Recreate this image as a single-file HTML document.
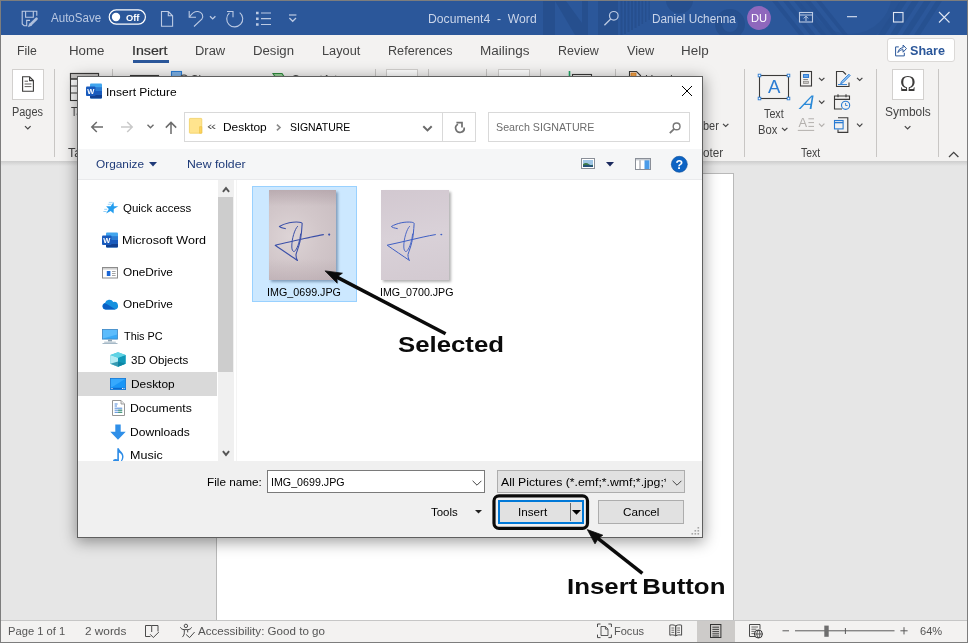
<!DOCTYPE html>
<html lang="en">
<head>
<meta charset="utf-8">
<title>Insert Picture - Word</title>
<style>
html,body{margin:0;padding:0;}
body{width:968px;height:643px;overflow:hidden;position:relative;background:#e6e6e6;font-family:"Liberation Sans",sans-serif;}
.a{position:absolute;}
.t{position:absolute;white-space:pre;line-height:1;transform-origin:0 0;font-family:"Liberation Sans",sans-serif;}
svg{position:absolute;overflow:visible;}
#frame{left:0;top:0;width:968px;height:643px;box-sizing:border-box;border:1px solid #7d7d7d;z-index:40;pointer-events:none;}
#titlebar{left:0;top:0;width:968px;height:35px;background:#2b579a;overflow:hidden;}
#tabs{left:0;top:35px;width:968px;height:31px;background:#f3f2f1;}
#ribbon{left:0;top:66px;width:968px;height:95px;background:#f3f2f1;}
#ribshadow{left:0;top:161px;width:968px;height:5px;background:linear-gradient(#cdcdcd,#e6e6e6);}
#page{left:216px;top:173px;width:518px;height:450px;background:#fff;border:1px solid #b9b9b9;box-sizing:border-box;}
#status{left:0;top:620px;width:968px;height:23px;background:#f3f2f1;border-top:1px solid #c6c6c6;box-sizing:border-box;}
.sep{position:absolute;width:1px;background:#c8c6c4;top:69px;height:88px;}
.bigbox{position:absolute;background:#fff;border:1px solid #d2d0ce;box-sizing:border-box;}
/* dialog */
#dlg{left:77px;top:76px;width:626px;height:462px;background:#fff;border:1px solid #5f5f5f;box-sizing:border-box;box-shadow:0 3px 14px 1px rgba(0,0,0,.38);z-index:10;}
.inbox{position:absolute;box-sizing:border-box;border:1px solid #d9d9d9;background:#fff;}
.btn{position:absolute;box-sizing:border-box;border:1px solid #adadad;background:#e1e1e1;}
</style>
</head>
<body>
<div id="root" class="a" style="left:0;top:0;width:968px;height:643px;will-change:transform;">
<!-- ======= Word window ======= -->
<div class="a" id="titlebar">
<svg style="left:0;top:0;" width="968" height="35" viewBox="0 0 968 35">
  <g fill="#264f8e">
    <rect x="543" y="1" width="12" height="34"/>
    <path d="M555 1l20 34h13V1h-6v22L566 1z"/>
    <rect x="598" y="1" width="20" height="34"/>
    <rect x="620.5" y="1" width="2" height="34"/><rect x="624" y="1" width="2" height="33"/><rect x="627.5" y="1" width="2" height="31"/>
    <rect x="631" y="1" width="2" height="29"/><rect x="634.5" y="1" width="2" height="27"/><rect x="638" y="1" width="1.8" height="25"/>
    <rect x="641.5" y="1" width="1.6" height="23"/><rect x="645" y="1" width="1.4" height="21"/><rect x="648.5" y="1" width="1.2" height="19"/>
    <circle cx="679.5" cy="0" r="13.5"/>
    <path d="M772 1h5.5l27 34h-5.5zM783 1h5.5l27 34h-5.5zM794 1h5.5l27 34h-5.5zM805 1h5.5l27 34h-5.5zM816 1h5l27 34h-5z" opacity=".8"/>
    <path d="M900 1h7l-22 34h-7zM912 1h7l-22 34h-7zM924 1h7l-22 34h-7zM936 1h6l-22 34h-6z" opacity=".75"/>
  </g>
  <circle cx="730" cy="24" r="11.5" fill="none" stroke="#264f8e" stroke-width="7"/>
  <circle cx="850" cy="-8" r="46" fill="none" stroke="#27518f" stroke-width="8" opacity=".55"/>
</svg>

<svg style="left:0;top:0;" width="968" height="35" viewBox="0 0 968 35" fill="none" stroke="#bccae3" stroke-width="1.1">
  <!-- save -->
  <path d="M36.8 15.7V11.3H22.2V23.9l1.9 1.8h2.6v-5.3h3.3"/>
  <path d="M25.6 11.3v5.9h7.7v-5.9"/>
  <path d="M36.5 18.7L30.6 24.5" stroke-width="2.6" stroke="#aebfdc" stroke-linecap="round"/>
  <path d="M31.5 25.4l-3.2 1.3 1.4-3.1z" fill="#aebfdc" stroke="#aebfdc" stroke-width=".6"/>
  <!-- toggle -->
  <rect x="109.2" y="9.9" width="36.2" height="14.2" rx="7.1" stroke="#fff" stroke-width="1.2"/>
  <circle cx="116" cy="17" r="4.2" fill="#fff" stroke="none"/>
  <!-- new doc -->
  <path d="M161.5 11.5h6.8l4.3 4.3v10.4h-11.1zM168.3 11.5v4.3h4.3"/>
  <!-- undo -->
  <path d="M189.2 11v6.2h6.8"/>
  <path d="M189.6 17c2-3.4 5-5.8 8.4-5.5 4 .4 6 4.4 3.8 7.6L194 26.5"/>
  <path d="M210 16.2l2.7 2.7 2.7-2.7" stroke-width="1.3"/>
  <!-- redo -->
  <path d="M239.7 12.6A8 8 0 1 1 229.4 12.9M227 11.5h6v5.8"/>
  <!-- bullets -->
  <path d="M256 13h2.6M256 18.7h2.6M256 24.5h2.6" stroke-width="2.6"/>
  <path d="M261 13h10M261 18.7h10M261 24.5h10" stroke-width="1.2"/>
  <!-- customize -->
  <path d="M289 15h7.4" stroke-width="1.2"/>
  <path d="M289.4 18l3.3 3.3 3.3-3.3" stroke-width="1.3"/>
  <!-- search -->
  <circle cx="613.8" cy="15.8" r="4.3" stroke-width="1.2"/>
  <path d="M610.7 19l-6.3 6.3" stroke-width="1.3"/>
  <!-- avatar -->
  <circle cx="759" cy="18" r="11.9" fill="#8f68bd" stroke="none"/>
  <!-- ribbon display -->
  <rect x="799.5" y="12.5" width="13" height="9.5" stroke-width="1.1"/>
  <path d="M799.5 15h13M806 21v-4.6M803.8 18.4l2.2-2.2 2.2 2.2" stroke-width="1"/>
  <!-- min / max / close -->
  <path d="M847 16.7h10" stroke="#dfe6f3" stroke-width="1.1"/>
  <rect x="893.5" y="12.5" width="9.5" height="9.5" stroke="#dfe6f3" stroke-width="1.1"/>
  <path d="M939 12l10.5 10.5M949.5 12L939 22.5" stroke="#dfe6f3" stroke-width="1.1"/>
</svg>

</div>
<div class="a" id="tabs">
  <div class="a" style="left:133px;top:25px;width:36px;height:3px;background:#2b579a;"></div>
  <div class="a" style="left:886.6px;top:3px;width:68px;height:23.5px;background:#fff;border:1px solid #dbd9d7;border-radius:3px;box-sizing:border-box;"></div>
<svg style="left:894.6px;top:9px;" width="12" height="12.5" viewBox="0 0 12 12.5" fill="none" stroke="#2b579a" stroke-width="1">
  <path d="M3.8 2.9H.6v9h8.7V8.8"/>
  <path d="M2.9 8.6c.4-2.8 2.2-4.7 5.2-4.9V1l3.3 3.6-3.3 3.6V5.7c-2.3 0-3.9.9-5.2 2.9z"/>
</svg>

</div>
<div class="a" id="ribbon"></div>
<!-- separators -->
<div class="sep" style="left:54px;"></div>
<div class="sep" style="left:112px;"></div>
<div class="sep" style="left:375px;"></div>
<div class="sep" style="left:428px;"></div>
<div class="sep" style="left:486px;"></div>
<div class="sep" style="left:540px;"></div>
<div class="sep" style="left:615px;"></div>
<div class="sep" style="left:744px;"></div>
<div class="sep" style="left:876px;"></div>
<div class="sep" style="left:938px;"></div>
<!-- big boxes -->
<div class="bigbox" style="left:12px;top:69px;width:32px;height:31px;"></div>
<div class="bigbox" style="left:386px;top:69px;width:32px;height:31px;"></div>
<div class="bigbox" style="left:498px;top:69px;width:32px;height:31px;"></div>
<div class="bigbox" style="left:892px;top:69px;width:32px;height:31px;"></div>
<svg style="left:0;top:66px;" width="968" height="95" viewBox="0 66 968 95" fill="none" stroke="#3b3a39" stroke-width="1.1">
  <!-- pages icon -->
  <path d="M22.6 76.8h7l3.8 3.8v10.6H22.6zM29.6 76.8v3.8h3.8"/>
  <path d="M24.6 81.2h3.4M24.6 84h6.8M24.6 86.6h6.8" stroke="#605e5c" stroke-width="1"/>
  <path d="M25 126.2l2.8 2.8 2.8-2.8" stroke-width="1.2" stroke="#444"/>
  <!-- table icon (mostly hidden) -->
  <rect x="70.5" y="73.5" width="28" height="27" fill="#fff"/>
  <rect x="70.5" y="73.5" width="28" height="5.5" fill="#c8c6c4"/>
  <path d="M70.5 79h28M70.5 86h28M70.5 93h28M80 79v21.5M89.5 79v21.5" stroke-width="1"/>
  <!-- picture icon top (hidden mostly) -->
  <rect x="130.5" y="75.5" width="28" height="22" />
  <!-- shapes icon -->
  <rect x="171.5" y="71.5" width="10" height="10" fill="#7fb2e5" stroke="#2b7cd3"/>
  <circle cx="184" cy="79" r="4" fill="#f3f2f1" stroke="#3b3a39"/>
  <!-- smartart icon -->
  <path d="M273 73.5h9l4 6h-9z" fill="#9ad29a" stroke="#2e8b3d"/>
  <!-- chart-ish -->
  <path d="M569.5 71v8" stroke="#21a366" stroke-width="1.6"/>
  <rect x="572.5" y="74.5" width="19" height="12"/>
  <!-- header icon -->
  <path d="M629.5 71.5h7l4 4v10h-11z" fill="#fff"/>
  <rect x="631" y="73" width="5" height="4" fill="#f7a64a" stroke="#d87b1c" stroke-width=".8"/>
  <!-- 'ber' caret -->
  <path d="M723 123.8l2.7 2.7 2.7-2.7" stroke-width="1.2" stroke="#444"/>
  <!-- text box icon -->
  <rect x="759.5" y="75.5" width="29" height="23" stroke="#3b3a39" stroke-width="1.1"/>
  <g fill="#fff" stroke="#2b7cd3" stroke-width=".9">
    <rect x="758.2" y="74.2" width="2.6" height="2.6"/><rect x="787.2" y="74.2" width="2.6" height="2.6"/>
    <rect x="758.2" y="97.2" width="2.6" height="2.6"/><rect x="787.2" y="97.2" width="2.6" height="2.6"/>
  </g>
  <text x="774.1" y="93.3" font-family="Liberation Sans, sans-serif" font-size="18.6" fill="#2b7cd3" stroke="none" text-anchor="middle">A</text>
  <path d="M782 127.8l2.7 2.7 2.7-2.7" stroke-width="1.2" stroke="#444"/>
  <!-- quick parts -->
  <rect x="800.5" y="71.5" width="11" height="14.5"/>
  <rect x="803.4" y="74.6" width="5.2" height="2.8" fill="#6aa9ea" stroke="#1a6ed0" stroke-width=".9"/>
  <path d="M803.3 79.6h4.6" stroke="#605e5c" stroke-width=".8"/>
  <rect x="803.4" y="81.3" width="5.2" height="2.2" fill="#c8c6c4" stroke="#8a8886" stroke-width=".7"/>
  <path d="M819 77.8l2.7 2.7 2.7-2.7" stroke-width="1.2" stroke="#444"/>
  <!-- wordart -->
  <text transform="translate(799.4 109.4) skewX(-20)" font-family="Liberation Sans, sans-serif" font-style="italic" font-size="19.5" fill="#2b8ad8" stroke="none">A</text>
  <path d="M819 100.6l2.7 2.7 2.7-2.7" stroke-width="1.2" stroke="#444"/>
  <!-- drop cap (disabled) -->
  <g stroke="#b3b0ad">
    <text x="802.9" y="126.5" font-family="Liberation Sans, sans-serif" font-size="12.9" fill="#b3b0ad" stroke="none" text-anchor="middle">A</text>
    <path d="M808.4 118.8h5.6M808.4 122.6h5.6M808.4 126.4h5.6M797.8 130.4h16.4" stroke-width="1"/>
    <path d="M819 123.6l2.7 2.7 2.7-2.7" stroke-width="1.2"/>
  </g>
  <!-- signature line -->
  <path d="M843 71.5h-6.5v15h12.5v-4"/>
  <path d="M843 71.5l3 3" />
  <path d="M848.9 74.2l1.3 1.3-7.3 7.3-2.3.9.9-2.3z" fill="#8ec1f2" stroke="#2b7cd3" stroke-width=".9"/>
  <path d="M838 84.6h9" stroke="#2b7cd3" stroke-width="1"/>
  <path d="M857 77.8l2.7 2.7 2.7-2.7" stroke-width="1.2" stroke="#444"/>
  <!-- date & time -->
  <path d="M842 109h-7.5v-13h15v4"/>
  <path d="M834.5 99.4h15M838 94.2v3M846 94.2v3"/>
  <circle cx="845.6" cy="105.3" r="4.1" fill="#f3f2f1" stroke="#2b7cd3" stroke-width="1.1"/>
  <path d="M845.6 103v2.5h2" stroke="#2b7cd3" stroke-width=".9"/>
  <!-- object -->
  <path d="M838 117.8h9.8v14.6h-9.8v-3"/>
  <rect x="834.5" y="120.5" width="8.6" height="8.4" fill="#f3f2f1" stroke="#2b7cd3" stroke-width="1.1"/>
  <path d="M834.5 122.6h8.6" stroke="#2b7cd3" stroke-width="1.4"/>
  <path d="M857 123.6l2.7 2.7 2.7-2.7" stroke-width="1.2" stroke="#444"/>
  <!-- symbols caret and collapse -->
  <path d="M904.8 126.2l2.8 2.8 2.8-2.8" stroke-width="1.2" stroke="#444"/>
  <path d="M949 157l4.7-4.7 4.7 4.7" stroke-width="1.3" stroke="#444"/>
</svg>
<span class="t" style="left:899.8px;top:71.6px;font-size:23px;color:#3b3a39;font-family:'Liberation Serif',serif;transform:scaleX(.92);">&#937;</span>

<div class="a" id="ribshadow"></div>
<div class="a" id="page"></div>
<div class="a" id="status">
<div class="a" style="left:697px;top:0;width:38px;height:21px;background:#cdcbc9;"></div>
<svg style="left:0;top:-1px;" width="968" height="23" viewBox="0 620 968 23" fill="none" stroke="#4a4a4a" stroke-width="1">
  <!-- book/proofing -->
  <path d="M151.7 632V625.5H145.5V636.5H150.4M151.7 625.5H158V631.4"/>
  <path d="M150.2 634.3L153.3 637.5 158.9 632"/>
  <!-- accessibility -->
  <circle cx="185.9" cy="625.9" r="1.7"/>
  <path d="M180.4 627.3c.6 1.5 2 2.3 3.9 2.3h3.4c1.9 0 3.3-.8 3.9-2.3M184.3 629.6v3.2c0 1.7-.6 2.9-2 4.3M187.7 629.6v2.8"/>
  <path d="M186.1 634.5l3.5 3.1 5-5.6"/>
  <!-- focus -->
  <path d="M597.5 627v-3h3M608.4 624h3v3M611.4 634.6v3h-3M600.5 637.6h-3v-3"/>
  <path d="M601 626.5h4.4l2.6 2.6v6.4h-7zM605.4 626.5v2.6h2.6" stroke-width=".9"/>
  <!-- read mode -->
  <path d="M669.8 625.2c2-.6 4-.4 5.9.6v10c-1.9-1-3.9-1.2-5.9-.6zM681.6 625.2c-2-.6-4-.4-5.9.6v10c1.9-1 3.9-1.2 5.9-.6z"/>
  <path d="M671.4 628h2.8M671.4 630.2h2.8M671.4 632.4h2.8M677.2 628h2.8M677.2 630.2h2.8M677.2 632.4h2.8" stroke-width=".8"/>
  <!-- print layout -->
  <rect x="710.5" y="624.5" width="10.4" height="13" stroke="#333"/>
  <path d="M712.4 627.2h6.6M712.4 629.4h6.6M712.4 631.6h6.6M712.4 633.8h6.6M712.4 636h6.6" stroke="#333" stroke-width=".9"/>
  <!-- web layout -->
  <path d="M755 636.5h-5.5v-12h10.5v5"/>
  <path d="M751.4 627h6.6M751.4 629.2h5M751.4 631.4h3.4M751.4 633.6h2.6" stroke-width=".8"/>
  <circle cx="758.4" cy="634" r="4" stroke="#333"/>
  <path d="M754.4 634h8M758.4 630c-2 2.4-2 5.6 0 8M758.4 630c2 2.4 2 5.6 0 8" stroke-width=".8" stroke="#333"/>
  <!-- zoom slider -->
  <path d="M782.5 630.8h6.5M795 630.8h99.5M900.4 630.8h7.2M904 627.2v7.2M845.4 628v6" stroke="#5a5a5a"/>
  <rect x="824.3" y="625.6" width="4.4" height="11.2" fill="#6e6e6e" stroke="none"/>
</svg>

</div>

<!-- ======= dialog ======= -->
<div class="a" id="dlg">
<div class="a" style="left:-78px;top:-77px;width:0;height:0;">
  <!-- title bar -->
  <svg style="left:86px;top:83px;" width="16" height="16" viewBox="0 0 16 16">
    <rect x="4" y="0.5" width="12" height="15" rx="1" fill="#41a5ee"/>
    <rect x="4" y="4.2" width="12" height="3.8" fill="#2b7cd3"/>
    <rect x="4" y="8" width="12" height="3.8" fill="#185abd"/>
    <path d="M4 11.8h12v2.7a1 1 0 0 1-1 1H5a1 1 0 0 1-1-1z" fill="#103f91"/>
    <rect x="0" y="3.5" width="9.5" height="9.5" rx="1" fill="#185abd"/>
    <text x="4.75" y="11" font-family="Liberation Sans, sans-serif" font-size="7.5" font-weight="700" fill="#fff" text-anchor="middle">W</text>
  </svg>
  <svg style="left:682px;top:86px;" width="10" height="10" viewBox="0 0 10 10"><path d="M0 0L10 10M10 0L0 10" stroke="#000" stroke-width="1" fill="none"/></svg>

  <!-- nav arrows -->
  <svg style="left:90px;top:120px;" width="90" height="15" viewBox="0 0 90 15">
    <path d="M13 7H1.8M6.8 2L1.8 7l5 5" stroke="#6b6b6b" stroke-width="1.5" fill="none"/>
    <path d="M31 7H42.2M37.2 2l5 5-5 5" stroke="#c9c9c9" stroke-width="1.5" fill="none"/>
    <path d="M57.5 4.8l3 3 3-3" stroke="#6b6b6b" stroke-width="1.4" fill="none"/>
    <path d="M81 14V2.5M75.8 7.6L81 2.4l5.2 5.2" stroke="#6b6b6b" stroke-width="1.5" fill="none"/>
  </svg>
  <!-- address box -->
  <div class="inbox" style="left:184px;top:112px;width:292px;height:30px;"></div>
  <div class="a" style="left:442px;top:113px;width:1px;height:28px;background:#d9d9d9;"></div>
  <svg style="left:188.8px;top:118.3px;" width="13.2" height="15.6" viewBox="0 0 13.2 15.6">
    <rect x=".4" y=".4" width="12.4" height="14.8" rx=".6" fill="#ffe48e" stroke="#f1cf62" stroke-width=".8"/>
    <path d="M10.6 8.7h2.2v6.5h-2.2z" fill="#ffd55c" stroke="#eabf45" stroke-width=".6"/>
  </svg>
  <svg style="left:276px;top:123.6px;" width="5" height="7" viewBox="0 0 5 7"><path d="M.9.7l3.1 2.8L.9 6.3" stroke="#8a8a8a" stroke-width="1.6" fill="none"/></svg>
  <svg style="left:421.5px;top:124.5px;" width="11" height="8" viewBox="0 0 11 8"><path d="M1.3 1.3l4.2 4.1 4.2-4.1" stroke="#6a6a6a" stroke-width="2" fill="none"/></svg>
  <svg style="left:450px;top:118px;" width="20" height="18" viewBox="450 118 20 18" fill="none" stroke="#707070" stroke-width="1.7">
    <path d="M464.2 127.5A4.3 4.3 0 1 1 458 124.2"/>
    <path d="M456.4 122.7H462V127.4"/>
  </svg>
  <!-- search box -->
  <div class="inbox" style="left:488px;top:112px;width:202px;height:30px;"></div>
  <svg style="left:669px;top:122px;" width="12" height="12" viewBox="0 0 12 12"><circle cx="7.6" cy="4.4" r="3.4" stroke="#777" stroke-width="1.4" fill="none"/><path d="M5.2 6.8L.8 11.2" stroke="#777" stroke-width="1.8"/></svg>

  <!-- toolbar row -->
  <div class="a" style="left:78px;top:149px;width:624px;height:31px;background:#f5f6f7;border-bottom:1px solid #e9eaec;box-sizing:border-box;"></div>
  <svg style="left:148.6px;top:162px;" width="8" height="5" viewBox="0 0 8 5"><path d="M0 0h8L4 4.4z" fill="#1e3a78"/></svg>
  <svg style="left:581px;top:158px;" width="14" height="11" viewBox="0 0 14 11">
    <rect x=".5" y=".5" width="13" height="10" fill="#fff" stroke="#8a8f98"/>
    <rect x="2" y="2" width="10" height="7" fill="#9fc6e6"/>
    <path d="M2 6.2c2-1.6 4-1.4 6 0s3 .8 4 .2V9H2z" fill="#3d7a4a"/>
    <path d="M2 7.6c3-.8 6-.6 10 0V9H2z" fill="#24507a"/>
  </svg>
  <svg style="left:605.5px;top:162px;" width="8" height="5" viewBox="0 0 8 5"><path d="M0 0h8L4 4.4z" fill="#1b2a5e"/></svg>
  <svg style="left:635px;top:158px;" width="16" height="12" viewBox="0 0 16 12">
    <rect x=".5" y=".5" width="15" height="11" fill="#fff" stroke="#8a8f98"/>
    <rect x="9.5" y="2" width="5" height="9" fill="#4a9be8"/>
    <path d="M5 1v10" stroke="#8a8f98"/>
    <rect x="1" y="1" width="14" height="1.4" fill="#c8ccd2"/>
  </svg>
  <svg style="left:671px;top:155.5px;" width="17" height="17" viewBox="0 0 17 17">
    <circle cx="8.3" cy="8.3" r="8" fill="#0c63c4" stroke="#084a96" stroke-width=".6"/>
    <text x="8.3" y="12.6" font-family="Liberation Sans, sans-serif" font-size="12.5" font-weight="700" fill="#fff" text-anchor="middle">?</text>
  </svg>

  <!-- nav pane scrollbar -->
  <div class="a" style="left:218px;top:180px;width:16px;height:281px;background:#f0f0f0;"></div>
  <div class="a" style="left:218px;top:197px;width:15px;height:175px;background:#cdcdcd;"></div>
  <svg style="left:221.5px;top:185.6px;" width="8" height="7" viewBox="0 0 8 7"><path d="M.9 5.9L4 2.1 7.1 5.9" stroke="#555" stroke-width="1.9" fill="none"/></svg>
  <svg style="left:221.5px;top:449.6px;" width="8" height="7" viewBox="0 0 8 7"><path d="M.9 1.1L4 4.9 7.1 1.1" stroke="#555" stroke-width="1.9" fill="none"/></svg>
  <div class="a" style="left:236px;top:180px;width:1px;height:281px;background:#f4f4f4;"></div>
  <!-- selected row -->
  <div class="a" style="left:78px;top:372px;width:139px;height:24px;background:#d9d9d9;"></div>
  <!-- quick access star -->
  <svg style="left:104px;top:201px;" width="15" height="14" viewBox="0 0 15 14">
    <polygon points="9.6,0.9 9.8,5.2 14.3,5.3 9.8,8.1 9.6,12.5 6.7,9.9 2.1,12.5 4.8,8.1 2.1,5.3 6.7,5.2" fill="#249dee"/>
    <path d="M4.8 1.4h4M3.8 3.3h3.6" stroke="#6fc0f5" stroke-width=".8" opacity=".8"/>
    <path d="M.2 8.3h3M-.6 10.5h3.2" stroke="#6fc0f5" stroke-width=".9" opacity=".8"/>
  </svg>
  <!-- word -->
  <svg style="left:102px;top:231.5px;" width="16" height="16" viewBox="0 0 16 16">
    <rect x="4" y="0.5" width="12" height="15" rx="1" fill="#41a5ee"/>
    <rect x="4" y="4.2" width="12" height="3.8" fill="#2b7cd3"/>
    <rect x="4" y="8" width="12" height="3.8" fill="#185abd"/>
    <path d="M4 11.8h12v2.7a1 1 0 0 1-1 1H5a1 1 0 0 1-1-1z" fill="#103f91"/>
    <rect x="0" y="3.5" width="9.5" height="9.5" rx="1" fill="#185abd"/>
    <text x="4.75" y="11" font-family="Liberation Sans, sans-serif" font-size="7.5" font-weight="700" fill="#fff" text-anchor="middle">W</text>
  </svg>
  <!-- onedrive window -->
  <svg style="left:102px;top:266.5px;" width="16" height="12" viewBox="0 0 16 12">
    <rect x=".5" y=".5" width="15" height="10.5" fill="#fff" stroke="#8c8c8c"/>
    <rect x="1" y="1" width="14" height="1.6" fill="#d0d0d0"/>
    <rect x="4.8" y="4" width="3.6" height="5" fill="#1a66d6"/>
    <path d="M10 4.5h3.6M10 6.5h3.6M10 8.5h3.6" stroke="#9a9a9a" stroke-width=".9"/>
  </svg>
  <!-- onedrive cloud -->
  <svg style="left:102px;top:298.5px;" width="16" height="11" viewBox="0 0 16 11">
    <path d="M3.6 10.6A3.3 3.3 0 0 1 3 4.1 4.5 4.5 0 0 1 11.3 3 3.8 3.8 0 0 1 13 10.6z" fill="#1490df"/>
    <path d="M3.6 10.6A3.3 3.3 0 0 1 2.6 4.3C6 5.5 9 8 13.6 10.4L13 10.6z" fill="#0a5fc4"/>
  </svg>
  <!-- this pc -->
  <svg style="left:102px;top:328.7px;" width="16" height="15" viewBox="0 0 16 15">
    <rect x=".5" y=".5" width="15" height="9.6" fill="#3aa9f6" stroke="#3b86c4" stroke-width=".8"/>
    <path d="M1 1h14v4.5L1 9.6z" fill="#5cbcfc"/>
    <rect x="6" y="10.4" width="4" height="2" fill="#8da2b2"/>
    <path d="M2.2 13.2h11.6M.5 14.5h15" stroke="#9bb0c0" stroke-width=".9"/>
  </svg>
  <!-- 3d objects -->
  <svg style="left:110px;top:352px;" width="16" height="15" viewBox="0 0 16 15">
    <path d="M8 .3L15.6 3v8.8L8 14.7.4 11.8V3z" fill="#37c2d8"/>
    <path d="M.4 3L8 5.7V14.7L.4 11.8z" fill="#b5ecf4"/>
    <path d="M8 5.7L15.6 3v8.8L8 14.7z" fill="#1298b8"/>
    <path d="M.4 11.8L8 9.6l7.6 2.2L8 14.7z" fill="#0e7f9c" opacity=".75"/>
    <path d="M.4 3L8 .3 15.6 3 8 5.7z" fill="#5fd3e4"/>
  </svg>
  <!-- desktop -->
  <svg style="left:110px;top:377.5px;" width="16" height="12" viewBox="0 0 16 12">
    <rect x=".4" y=".4" width="15.2" height="11.2" fill="#1a96f6" stroke="#1279d6" stroke-width=".8"/>
    <path d="M1 1h14L1 9.8z" fill="#36a9fd"/>
    <rect x=".8" y="9.8" width="14.4" height="1.4" fill="#0c6bd0"/>
    <path d="M1.4 10.5h1.2M12 10.5h1M13.6 10.5h1" stroke="#fff" stroke-width=".9"/>
  </svg>
  <!-- documents -->
  <svg style="left:111.5px;top:400px;" width="13" height="16" viewBox="0 0 13 16">
    <path d="M.5.5h8.5l3.5 3.5v11.5H.5z" fill="#fff" stroke="#8a8a8a" stroke-width=".9"/>
    <path d="M9 .5v3.5h3.5" fill="#e8e8e8" stroke="#8a8a8a" stroke-width=".8"/>
    <path d="M2.6 4h3M2.6 6h2.4M2.6 8.2h7.6M2.6 10.2h7.6M2.6 12.3h7.6" stroke="#3a7bd5" stroke-width=".9"/>
    <path d="M6.2 12.3h4M6.2 10.2h4" stroke="#3f9c55" stroke-width=".9"/>
  </svg>
  <!-- downloads -->
  <svg style="left:110px;top:424px;" width="16" height="16" viewBox="0 0 16 16">
    <path d="M5.3.4h5.4v7.3h5L8 15.7.3 7.7h5z" fill="#2f8fe8"/>
  </svg>
  <!-- music -->
  <svg style="left:113px;top:447.5px;" width="11" height="13.5" viewBox="0 0 11 13.5">
    <path d="M4.3.2h1.6c.6 2.6 4.6 4.2 4.6 8.2 0 2.2-1 3.8-1.8 5.1H7.5c.9-1.4 1.6-3 1.6-4.8 0-2-1.6-3.4-3.2-4.1v8.9H4.3z" fill="#2c8be6"/>
    <ellipse cx="2.8" cy="13" rx="2.8" ry="2" fill="#2c8be6"/>
  </svg>


  <!-- thumbnails -->
  <div class="a" style="left:252px;top:186px;width:105px;height:116px;background:#cce8ff;border:1px solid #99d1ff;box-sizing:border-box;"></div>
  <div class="a" style="left:269px;top:190px;width:67px;height:90px;background:linear-gradient(180deg,rgba(150,130,138,.34) 0%,rgba(150,130,138,0) 18%,rgba(150,130,138,0) 76%,rgba(150,130,138,.22) 100%),radial-gradient(ellipse at 32% 52%,#ddd4d6 0%,#d2c7ca 45%,#c8bcc0 100%);box-shadow:1.5px 1.5px 2.5px rgba(20,50,90,.4);"></div>
  <div class="a" style="left:381px;top:190px;width:68px;height:90px;background:linear-gradient(170deg,#d2c8d0 0%,#d9d1d8 50%,#d3cad1 100%);box-shadow:1.5px 1.5px 2.5px rgba(0,0,0,.3);"></div>
  <svg style="left:269px;top:190px;" width="68" height="90" viewBox="0 0 68 90">
    <g fill="none" stroke="#3a4fa8" stroke-width="1.1" stroke-linecap="round" stroke-linejoin="round">
      <path d="M16.3 38.6C13.5 38 11 37.5 10.4 36.5C13 34.8 17 33.5 20.2 32.8C24 32 28 31.9 30.3 32.2C32.5 32.5 33.5 33 33.1 34.2C32.9 37 32.7 40 32.4 43C32 47 31.4 50 30.7 52.5C29.8 57 28 61 27 64.5C26.9 67 27.6 69 28.5 70.5C22 66 13 60 6.2 55.2C14 53.6 22 51.6 30 49.8C38 48 46 46 54.4 44.6"/>
      <path d="M28.5 36.4C25.8 39 22.6 49 22.8 57C23 61.5 24.8 62.5 26.4 60.5C29 57 31 50 31.6 44" stroke-width="1"/>
      <circle cx="60.2" cy="44.6" r=".5" fill="#3a4fa8"/>
    </g>
  </svg>
  <svg style="left:381px;top:190px;" width="68" height="90" viewBox="0 0 68 90">
    <g fill="none" stroke="#3f5fc4" stroke-width="1" stroke-linecap="round" stroke-linejoin="round">
      <path d="M16.3 38.6C13.5 38 11 37.5 10.4 36.5C13 34.8 17 33.5 20.2 32.8C24 32 28 31.9 30.3 32.2C32.5 32.5 33.5 33 33.1 34.2C32.9 37 32.7 40 32.4 43C32 47 31.4 50 30.7 52.5C29.8 57 28 61 27 64.5C26.9 67 27.6 69 28.5 70.5C22 66 13 60 6.2 55.2C14 53.6 22 51.6 30 49.8C38 48 46 46 54.4 44.6"/>
      <path d="M28.5 36.4C25.8 39 22.6 49 22.8 57C23 61.5 24.8 62.5 26.4 60.5C29 57 31 50 31.6 44" stroke-width=".9"/>
      <circle cx="60.2" cy="44.6" r=".45" fill="#3f5fc4"/>
    </g>
  </svg>

  <!-- bottom panel -->
  <div class="a" style="left:78px;top:461px;width:624px;height:76px;background:#f0f0f0;"></div>
  <div class="a" style="left:267px;top:470px;width:218px;height:23px;background:#fff;border:1px solid #7a7a7a;box-sizing:border-box;"></div>
  <svg style="left:471.5px;top:479.5px;" width="10" height="6" viewBox="0 0 10 6"><path d="M.6.8L5 5.2 9.4.8" stroke="#444" stroke-width="1" fill="none"/></svg>
  <div class="btn" style="left:497px;top:470px;width:188px;height:23px;"></div>
  <svg style="left:671.5px;top:479.5px;" width="10" height="6" viewBox="0 0 10 6"><path d="M.6.8L5 5.2 9.4.8" stroke="#444" stroke-width="1" fill="none"/></svg>
  <svg style="left:474.5px;top:510.3px;" width="7" height="4" viewBox="0 0 7 4"><path d="M0 0h7L3.5 3.6z" fill="#222"/></svg>
  <div class="btn" style="left:498px;top:500px;width:86px;height:23.5px;border:2px solid #0078d7;"></div>
  <div class="a" style="left:569.5px;top:502.5px;width:1px;height:18.5px;background:#6a6a6a;"></div>
  <svg style="left:572.2px;top:509.5px;" width="9" height="5" viewBox="0 0 9 5"><path d="M0 0h9L4.5 4.8z" fill="#000"/></svg>
  <div class="btn" style="left:598px;top:500px;width:86px;height:23.5px;"></div>
  <svg style="left:690px;top:526.4px;" width="10" height="10" viewBox="0 0 10 10" fill="#a6a6a6">
    <rect x="7.5" y="1" width="1.6" height="1.6"/><rect x="4.5" y="4" width="1.6" height="1.6"/><rect x="7.5" y="4" width="1.6" height="1.6"/>
    <rect x="1.5" y="7" width="1.6" height="1.6"/><rect x="4.5" y="7" width="1.6" height="1.6"/><rect x="7.5" y="7" width="1.6" height="1.6"/>
  </svg>
</div>

</div>

<!-- ======= annotations ======= -->
<svg style="left:0;top:0;z-index:25;" width="968" height="643" viewBox="0 0 968 643">
  <rect x="494" y="495.8" width="93.5" height="32.5" rx="5" ry="5" fill="none" stroke="#0b0b0b" stroke-width="3.2"/>
  <!-- arrow 1 -->
  <path d="M445.6 333.8L335 276.1" stroke="#0b0b0b" stroke-width="3.5" fill="none"/>
  <path d="M325.1 270.9L342.4 273.2 336.8 277 337.2 283.2z" fill="#0b0b0b" stroke="#0b0b0b" stroke-width=".8" stroke-linejoin="round"/>
  <!-- arrow 2 -->
  <path d="M642.4 573.3L597 537.6" stroke="#0b0b0b" stroke-width="3.5" fill="none"/>
  <path d="M587.3 529.6L602.8 535.2 598.2 538.4 595 543.8z" fill="#0b0b0b" stroke="#0b0b0b" stroke-width=".8" stroke-linejoin="round"/>
</svg>


<!-- ======= text ======= -->
<span class="t" id="t0" style="left:51.20px;top:12.00px;font-size:12px;color:#b9c8e2;font-weight:400;transform:scaleX(0.9631);">AutoSave</span>
<span class="t" id="t1" style="left:126.31px;top:13.00px;font-size:9.6px;color:#ffffff;font-weight:700;transform:scaleX(0.9704);">Off</span>
<span class="t" id="t2" style="left:428.39px;top:13.00px;font-size:12px;color:#c9d4e9;font-weight:400;transform:scaleX(1.0142);">Document4  -  Word</span>
<span class="t" id="t3" style="left:652.02px;top:13.00px;font-size:12px;color:#c9d4e9;font-weight:400;transform:scaleX(0.9822);">Daniel Uchenna</span>
<span class="t" id="t4" style="left:750.53px;top:13.00px;font-size:11.5px;color:#ffffff;font-weight:400;transform:scaleX(0.9695);">DU</span>
<span class="t" id="t5" style="left:17.48px;top:45.00px;font-size:12px;color:#444;font-weight:400;transform:scaleX(1.0197);">File</span>
<span class="t" id="t6" style="left:69.29px;top:45.00px;font-size:12px;color:#444;font-weight:400;transform:scaleX(1.1082);">Home</span>
<span class="t" id="t7" style="left:132.22px;top:45.00px;font-size:12px;color:#333;font-weight:400;transform:scaleX(1.1828);-webkit-text-stroke:.22px #3a3a3a;">Insert</span>
<span class="t" id="t8" style="left:194.52px;top:45.00px;font-size:12px;color:#444;font-weight:400;transform:scaleX(1.0778);">Draw</span>
<span class="t" id="t9" style="left:252.50px;top:45.00px;font-size:12px;color:#444;font-weight:400;transform:scaleX(1.0986);">Design</span>
<span class="t" id="t10" style="left:321.54px;top:45.00px;font-size:12px;color:#444;font-weight:400;transform:scaleX(1.0629);">Layout</span>
<span class="t" id="t11" style="left:388.45px;top:45.00px;font-size:12px;color:#444;font-weight:400;transform:scaleX(1.0517);">References</span>
<span class="t" id="t12" style="left:480.47px;top:45.00px;font-size:12px;color:#444;font-weight:400;transform:scaleX(1.1271);">Mailings</span>
<span class="t" id="t13" style="left:558.26px;top:45.00px;font-size:12px;color:#444;font-weight:400;transform:scaleX(1.0379);">Review</span>
<span class="t" id="t14" style="left:626.80px;top:45.00px;font-size:12px;color:#444;font-weight:400;transform:scaleX(1.0563);">View</span>
<span class="t" id="t15" style="left:681.48px;top:45.00px;font-size:12px;color:#444;font-weight:400;transform:scaleX(1.1183);">Help</span>
<span class="t" id="t16" style="left:910.38px;top:45.00px;font-size:12px;color:#2b579a;font-weight:700;transform:scaleX(1.0492);">Share</span>
<span class="t" id="t17" style="left:11.89px;top:106.00px;font-size:12px;color:#444;font-weight:400;transform:scaleX(0.9108);">Pages</span>
<span class="t" id="t18" style="left:70.79px;top:106.00px;font-size:12px;color:#444;font-weight:400;transform:scaleX(0.8571);">Table</span>
<span class="t" id="t19" style="left:67.84px;top:147.00px;font-size:12px;color:#444;font-weight:400;transform:scaleX(1.0265);">Tables</span>
<span class="t" id="t20" style="left:702.52px;top:120.00px;font-size:12px;color:#444;font-weight:400;transform:scaleX(0.9091);">ber</span>
<span class="t" id="t21" style="left:702.51px;top:147.00px;font-size:12px;color:#444;font-weight:400;transform:scaleX(0.9750);">oter</span>
<span class="t" id="t22" style="left:763.88px;top:108.00px;font-size:12px;color:#444;font-weight:400;transform:scaleX(0.8966);">Text</span>
<span class="t" id="t23" style="left:757.67px;top:124.00px;font-size:12px;color:#444;font-weight:400;transform:scaleX(0.9333);">Box</span>
<span class="t" id="t24" style="left:801.38px;top:147.00px;font-size:12px;color:#444;font-weight:400;transform:scaleX(0.8690);">Text</span>
<span class="t" id="t25" style="left:884.50px;top:106.00px;font-size:12px;color:#444;font-weight:400;transform:scaleX(0.9956);">Symbols</span>
<span class="t" id="t26" style="left:190.53px;top:74.00px;font-size:12px;color:#444;font-weight:400;transform:scaleX(0.9308);">Shapes</span>
<span class="t" id="t27" style="left:291.52px;top:74.00px;font-size:12px;color:#444;font-weight:400;transform:scaleX(0.9626);">SmartArt</span>
<span class="t" id="t28" style="left:645.03px;top:74.00px;font-size:12px;color:#444;font-weight:400;transform:scaleX(0.9673);">Header</span>
<span class="t" id="t29" style="left:8.31px;top:626.00px;font-size:10.6px;color:#555;font-weight:400;transform:scaleX(1.0547);">Page 1 of 1</span>
<span class="t" id="t30" style="left:84.64px;top:626.00px;font-size:10.6px;color:#555;font-weight:400;transform:scaleX(1.1145);">2 words</span>
<span class="t" id="t31" style="left:198.10px;top:626.00px;font-size:10.6px;color:#555;font-weight:400;transform:scaleX(1.0944);">Accessibility: Good to go</span>
<span class="t" id="t32" style="left:613.92px;top:626.00px;font-size:10.6px;color:#555;font-weight:400;transform:scaleX(1.0414);">Focus</span>
<span class="t" id="t33" style="left:920.48px;top:626.00px;font-size:10.6px;color:#555;font-weight:400;transform:scaleX(1.0469);">64%</span>
<span class="t" id="t34" style="left:398.15px;top:333.00px;font-size:22.8px;color:#0b0b0b;font-weight:700;transform:scaleX(1.1301);z-index:30;">Selected</span>
<span class="t" id="t35" style="left:566.60px;top:575.00px;font-size:22.8px;color:#0b0b0b;font-weight:700;transform:scaleX(1.1328);z-index:30;word-spacing:-2px;">Insert Button</span>
<span class="t" id="t36" style="left:105.98px;top:87.00px;font-size:11.8px;color:#000;font-weight:400;transform:scaleX(1.0176);z-index:20;">Insert Picture</span>
<span class="t" id="t37" style="left:206.69px;top:121.00px;font-size:11.8px;color:#555;font-weight:400;transform:scaleX(1.4182);z-index:20;">«</span>
<span class="t" id="t38" style="left:223.29px;top:122.00px;font-size:11.8px;color:#000;font-weight:400;transform:scaleX(1.0108);z-index:20;">Desktop</span>
<span class="t" id="t39" style="left:289.86px;top:122.00px;font-size:11.8px;color:#000;font-weight:400;transform:scaleX(0.8881);z-index:20;">SIGNATURE</span>
<span class="t" id="t40" style="left:496.45px;top:122.00px;font-size:11.8px;color:#6d6d6d;font-weight:400;transform:scaleX(0.9067);z-index:20;">Search SIGNATURE</span>
<span class="t" id="t41" style="left:95.70px;top:159.00px;font-size:11.8px;color:#1e3a78;font-weight:400;transform:scaleX(1.0032);z-index:20;">Organize</span>
<span class="t" id="t42" style="left:186.56px;top:159.00px;font-size:11.8px;color:#1e3a78;font-weight:400;transform:scaleX(1.0389);z-index:20;">New folder</span>
<span class="t" id="t43" style="left:122.81px;top:203.00px;font-size:11.8px;color:#000;font-weight:400;transform:scaleX(0.9733);z-index:20;">Quick access</span>
<span class="t" id="t44" style="left:122.24px;top:235.00px;font-size:11.8px;color:#000;font-weight:400;transform:scaleX(1.0628);z-index:20;">Microsoft Word</span>
<span class="t" id="t45" style="left:122.80px;top:267.00px;font-size:11.8px;color:#000;font-weight:400;transform:scaleX(1.0010);z-index:20;">OneDrive</span>
<span class="t" id="t46" style="left:122.80px;top:299.00px;font-size:11.8px;color:#000;font-weight:400;transform:scaleX(1.0010);z-index:20;">OneDrive</span>
<span class="t" id="t47" style="left:123.57px;top:331.00px;font-size:11.8px;color:#000;font-weight:400;transform:scaleX(0.9212);z-index:20;">This PC</span>
<span class="t" id="t48" style="left:131.01px;top:355.00px;font-size:11.8px;color:#000;font-weight:400;transform:scaleX(0.9809);z-index:20;">3D Objects</span>
<span class="t" id="t49" style="left:130.59px;top:379.00px;font-size:11.8px;color:#000;font-weight:400;transform:scaleX(1.0084);z-index:20;">Desktop</span>
<span class="t" id="t50" style="left:130.46px;top:403.00px;font-size:11.8px;color:#000;font-weight:400;transform:scaleX(1.0369);z-index:20;">Documents</span>
<span class="t" id="t51" style="left:130.48px;top:427.00px;font-size:11.8px;color:#000;font-weight:400;transform:scaleX(1.0228);z-index:20;">Downloads</span>
<span class="t" id="t52" style="left:130.44px;top:450.00px;font-size:11.8px;color:#000;font-weight:400;transform:scaleX(1.0610);z-index:20;clip-path:inset(0 0 1.5px 0);">Music</span>
<span class="t" id="t53" style="left:267.39px;top:287.00px;font-size:11.8px;color:#000;font-weight:400;transform:scaleX(0.9094);z-index:20;">IMG_0699.JPG</span>
<span class="t" id="t54" style="left:379.80px;top:287.00px;font-size:11.8px;color:#000;font-weight:400;transform:scaleX(0.9044);z-index:20;">IMG_0700.JPG</span>
<span class="t" id="t55" style="left:207.30px;top:477.00px;font-size:11.8px;color:#000;font-weight:400;transform:scaleX(0.9962);z-index:20;">File name:</span>
<span class="t" id="t56" style="left:270.79px;top:477.00px;font-size:11.8px;color:#000;font-weight:400;transform:scaleX(0.9057);z-index:20;">IMG_0699.JPG</span>
<span class="t" id="t57" style="left:501.10px;top:477.00px;font-size:11.8px;color:#000;font-weight:400;transform:scaleX(1.0391);z-index:20;clip-path:inset(0 2.6px 0 0);">All Pictures (*.emf;*.wmf;*.jpg;*</span>
<span class="t" id="t58" style="left:430.56px;top:507.00px;font-size:11.8px;color:#000;font-weight:400;transform:scaleX(0.9720);z-index:20;">Tools</span>
<span class="t" id="t59" style="left:518.21px;top:507.00px;font-size:11.8px;color:#000;font-weight:400;transform:scaleX(0.9895);z-index:20;">Insert</span>
<span class="t" id="t60" style="left:622.80px;top:507.00px;font-size:11.8px;color:#000;font-weight:400;transform:scaleX(0.9915);z-index:20;">Cancel</span>
<div class="a" id="frame"></div>
</div>
</body>
</html>
